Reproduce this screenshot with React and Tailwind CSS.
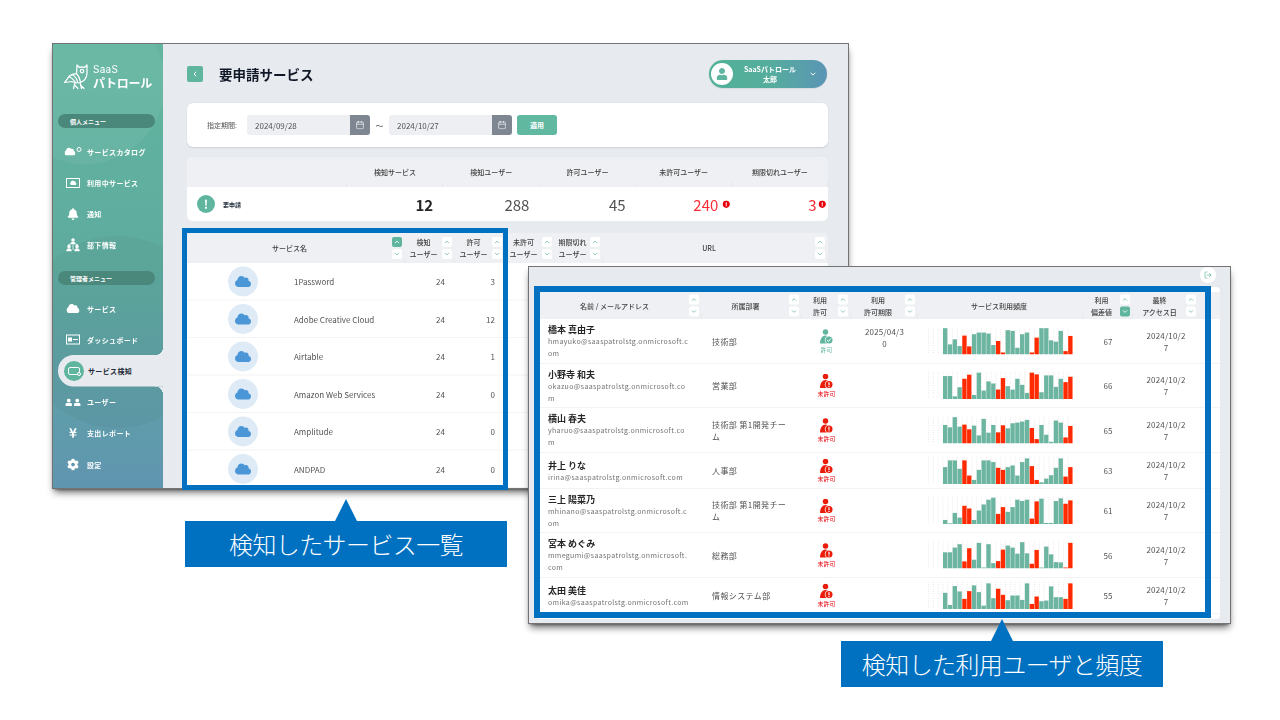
import { Calendar, ChevronDown, ChevronLeft, ChevronUp, LogOut } from 'lucide-react';
import { FaBell, FaCloud, FaCog, FaExclamationCircle, FaUser, FaYenSign } from 'react-icons/fa';

const services = [
  ['1Password', 24, 3],
  ['Adobe Creative Cloud', 24, 12],
  ['Airtable', 24, 1],
  ['Amazon Web Services', 24, 0],
  ['Amplitude', 24, 0],
  ['ANDPAD', 24, 0],
];

// bar heights out of 80, negative = red
const users = [
  {
    name: '橋本 真由子', mail: 'hmayuko@saaspatrolstg.onmicrosoft.com', dept: '技術部', ok: true, limit: '2025/04/30', score: 67,
    bars: [78, 30, 45, 25, -56, -24, 60, 65, 65, 62, 28, -40, -6, 72, 70, 20, 60, 65, -6, -50, 78, 78, 42, 38, 70, -10, -55],
  },
  {
    name: '小野寺 和夫', mail: 'okazuo@saaspatrolstg.onmicrosoft.com', dept: '営業部', score: 66,
    bars: [68, 68, 8, 35, -60, -72, 12, 78, 25, 52, 46, -28, -62, 38, 28, 60, 42, 18, -78, -73, 20, 70, 70, 36, 60, -50, -66],
  },
  {
    name: '横山 春夫', mail: 'yharuo@saaspatrolstg.onmicrosoft.com', dept: '技術部 第1開発チーム', score: 65,
    bars: [55, 48, 78, 50, -56, -42, 53, 24, 73, 32, 55, -33, -54, 45, 60, 62, 65, 70, -46, -13, 55, 26, 5, 68, 62, -18, -52],
  },
  {
    name: '井上 りな', mail: 'irina@saaspatrolstg.onmicrosoft.com', dept: '人事部', score: 63,
    bars: [50, 70, 70, 45, -70, -25, 12, 42, 70, 70, 65, -48, -42, 50, 55, 25, 65, 76, -53, -12, 5, 16, 26, 48, 76, -22, -50],
  },
  {
    name: '三上 陽菜乃', mail: 'mhinano@saaspatrolstg.onmicrosoft.com', dept: '技術部 第1開発チーム', score: 61,
    bars: [12, 2, 33, 19, -54, -46, 12, 40, 58, 72, 78, -30, -50, 36, 50, 72, 68, 72, -16, -67, 75, 3, 3, 68, 76, -60, -70],
  },
  {
    name: '宮本 めぐみ', mail: 'mmegumi@saaspatrolstg.onmicrosoft.com', dept: '総務部', score: 56,
    bars: [48, 48, 62, 72, -21, -60, 26, 76, 3, 72, 16, -22, -56, 68, 62, 44, 78, 45, -14, -55, 3, 65, 42, 19, 18, -3, -76],
  },
  {
    name: '太田 美佳', mail: 'omika@saaspatrolstg.onmicrosoft.com', dept: '情報システム部', score: 55,
    bars: [48, 12, 68, 52, -30, -53, 70, 50, 10, 76, 32, -60, -42, 26, 40, 40, 27, 76, -15, -37, 23, 25, 67, 35, 35, -30, -76],
  },
];

const userGrid = 'grid grid-cols-[324px_200px_98px_134px_330px_100px_132px]';
const serviceGrid = 'grid grid-cols-[436px_100px_100px_100px_96px_1fr]';
const summaryGrid = 'grid grid-cols-[320px_repeat(5,1fr)]';

function OwlLogo() {
  return (
    <svg width="52" height="54" viewBox="0 0 52 54" fill="none" stroke="white" strokeWidth="2.5" strokeLinejoin="round" strokeLinecap="round">
      <path d="M28 3 L33 8 Q38 6 43 8 L48 3 L48 20 Q47 34 34 38 Q24 40 18 36 L3 38 L12 26 Q18 20 27 20 Z" />
      <circle cx="38" cy="15" r="3.5" />
      <path d="M12 26 Q20 30 24 36 M18 22 Q26 26 29 36 M27 20 Q33 26 35 37" />
      <path d="M24 39 L21 50 M24 44 L30 50 M34 38 L37 50 M36 44 L42 50" />
    </svg>
  );
}

function SideIcon({ name }) {
  if (name === 'catalog') {
    return (
      <span className="flex items-center gap-0.5 text-white">
        <FaCloud size={22} />
        <span className="mb-2 size-2.5 rounded-full border-2 border-white" />
      </span>
    );
  }
  if (name === 'inuse') {
    return (
      <span className="flex h-5 w-7 items-center justify-center border-2 border-white text-white">
        <FaCloud size={13} />
      </span>
    );
  }
  if (name === 'bell') return <FaBell size={24} className="text-white" />;
  if (name === 'team') {
    return (
      <svg width="28" height="28" viewBox="0 0 28 28" fill="white" stroke="white">
        <circle cx="14" cy="4" r="3" />
        <path d="M9 12 Q9 8 14 8 Q19 8 19 12 Z" />
        <circle cx="6" cy="17" r="3" />
        <path d="M1 26 Q1 21 6 21 Q11 21 11 26 Z" />
        <circle cx="22" cy="17" r="3" />
        <path d="M17 26 Q17 21 22 21 Q27 21 27 26 Z" />
        <path d="M9 13 L5 13 L5 14 M19 13 L23 13 L23 14 M14 13 L14 24" fill="none" strokeWidth="1.5" />
      </svg>
    );
  }
  if (name === 'cloud') return <FaCloud size={26} className="text-white" />;
  if (name === 'board') {
    return (
      <span className="flex h-5 w-7 items-center gap-0.5 border-2 border-white px-0.5">
        <span className="size-2 bg-white" />
        <span className="h-0.5 flex-1 bg-white" />
      </span>
    );
  }
  if (name === 'users') {
    return (
      <span className="flex items-center gap-0.5 text-white">
        <FaUser size={15} />
        <FaUser size={15} />
      </span>
    );
  }
  if (name === 'yen') return <FaYenSign size={22} className="text-white" />;
  return <FaCog size={24} className="text-white" />;
}

function SideItem({ icon, label }) {
  return (
    <div className="relative flex flex-1 items-center gap-3 pl-6">
      <span className="flex w-8 justify-center">
        <SideIcon name={icon} />
      </span>
      <span className="text-sm font-bold tracking-wider text-white">{label}</span>
    </div>
  );
}

function ActiveItem({ label }) {
  return (
    <div className="relative ml-2.5 flex flex-1 items-center gap-2 rounded-l-full bg-[#e7eaee] pl-3">
      <span className="absolute -top-4 right-0 size-4 bg-[radial-gradient(circle_at_0_0,transparent_16px,#e7eaee_16px)]" />
      <span className="absolute -bottom-4 right-0 size-4 bg-[radial-gradient(circle_at_0_100%,transparent_16px,#e7eaee_16px)]" />
      <span className="flex size-10 items-center justify-center rounded-full bg-[#5fb59e]">
        <span className="relative h-4 w-6 rounded-sm border-2 border-white">
          <span className="absolute -bottom-1 -right-1 size-2 rounded-full border-2 border-white bg-[#5fb59e]" />
        </span>
      </span>
      <span className="text-sm font-bold tracking-wider text-gray-800">{label}</span>
    </div>
  );
}

function MenuPill({ label, className }) {
  return (
    <div className={`relative ml-2.5 mr-4 flex h-7 shrink-0 items-center rounded-full bg-[#4b887c] px-6 text-xs font-bold text-white ${className}`}>
      {label}
    </div>
  );
}

function Sidebar() {
  return (
    <div className="relative flex w-55 shrink-0 flex-col overflow-hidden bg-linear-to-b from-[#63b5a0] via-[#5eab9e] to-[#6095b0] pb-4">
      <div className="absolute -left-24 -top-20 size-80 rounded-full bg-white/5" />
      <div className="absolute -left-16 top-96 size-96 rounded-full bg-black/3" />
      <div className="relative flex h-35 shrink-0 items-center gap-2 pb-2 pl-5">
        <OwlLogo />
        <div className="flex flex-col text-white">
          <span className="font-['Inter',sans-serif] text-xl leading-6 tracking-wide">SaaS</span>
          <span className="text-2xl font-bold leading-8 tracking-tight">パトロール</span>
        </div>
      </div>
      <MenuPill label="個人メニュー" className="mb-4" />
      <SideItem icon="catalog" label="サービスカタログ" />
      <SideItem icon="inuse" label="利用中サービス" />
      <SideItem icon="bell" label="通知" />
      <SideItem icon="team" label="部下情報" />
      <MenuPill label="管理者メニュー" className="mb-4 mt-5" />
      <SideItem icon="cloud" label="サービス" />
      <SideItem icon="board" label="ダッシュボード" />
      <ActiveItem label="サービス検知" />
      <SideItem icon="users" label="ユーザー" />
      <SideItem icon="yen" label="支出レポート" />
      <SideItem icon="gear" label="設定" />
    </div>
  );
}

function DateInput({ value }) {
  return (
    <div className="flex h-10 w-61.5 items-center overflow-hidden rounded-md bg-[#edeff3]">
      <span className="flex-1 pl-4 text-base text-neutral-600">{value}</span>
      <span className="flex h-10 w-10 items-center justify-center bg-[#7d8691]">
        <Calendar size={18} className="text-gray-200" />
      </span>
    </div>
  );
}

function Sort({ active }) {
  const cell = 'flex size-5 items-center justify-center rounded';
  const on = 'bg-[#5fb59e] text-white';
  const off = 'bg-white text-[#7cc0ae]';
  return (
    <div className="flex shrink-0 flex-col gap-1">
      <span className={`${cell} ${active === 'up' ? on : off}`}>
        <ChevronUp size={14} strokeWidth={3} />
      </span>
      <span className={`${cell} ${active === 'down' ? on : off}`}>
        <ChevronDown size={14} strokeWidth={3} />
      </span>
    </div>
  );
}

function HeadCell({ children, active, sort = true }) {
  return (
    <div className="relative flex items-center pr-1.5 text-sm font-medium leading-6 text-neutral-700">
      <span className="flex-1 text-center">{children}</span>
      {sort && <Sort active={active} />}
      <span className="absolute bottom-0 right-0 h-2.5 w-0.5 bg-gray-200" />
    </div>
  );
}

function SummaryCard() {
  const heads = ['検知サービス', '検知ユーザー', '許可ユーザー', '未許可ユーザー', '期限切れユーザー'];
  return (
    <div className="mt-5 overflow-hidden rounded-xl bg-white">
      <div className={`${summaryGrid} h-15 bg-[#eef0f3]`}>
        <div className="relative">
          <span className="absolute bottom-0 right-0 h-2.5 w-0.5 bg-gray-200" />
        </div>
        {heads.map((h) => (
          <div key={h} className="relative flex items-center justify-center text-sm font-medium text-neutral-700">
            {h}
            <span className="absolute bottom-0 right-0 h-2.5 w-0.5 bg-gray-200" />
          </div>
        ))}
      </div>
      <div className={`${summaryGrid} h-17 items-center`}>
        <div className="flex items-center gap-4 pl-5">
          <span className="flex size-9 items-center justify-center rounded-full bg-[#5fb59e] text-2xl font-bold text-white">!</span>
          <span className="text-xs font-bold text-gray-800">要申請</span>
        </div>
        <div className="pr-5 text-right text-3xl font-bold text-neutral-800">12</div>
        <div className="pr-5 text-right text-3xl text-neutral-600">288</div>
        <div className="pr-5 text-right text-3xl text-neutral-600">45</div>
        <div className="flex items-center justify-end gap-2 pr-1 text-3xl text-red-500">
          240 <FaExclamationCircle size={15} className="text-red-600" />
        </div>
        <div className="flex items-center justify-end gap-1 pr-1 text-3xl text-red-500">
          3 <FaExclamationCircle size={15} className="text-red-600" />
        </div>
      </div>
    </div>
  );
}

function ServiceTable() {
  return (
    <div className="mt-6 rounded-t-xl bg-white">
      <div className={`${serviceGrid} h-15 rounded-t-xl bg-[#eef0f3]`}>
        <HeadCell active="up">サービス名</HeadCell>
        <HeadCell>検知<br />ユーザー</HeadCell>
        <HeadCell>許可<br />ユーザー</HeadCell>
        <HeadCell>未許可<br />ユーザー</HeadCell>
        <HeadCell>期限切れ<br />ユーザー</HeadCell>
        <HeadCell>URL</HeadCell>
      </div>
      {services.map(([name, found, allowed]) => (
        <div key={name} className={`${serviceGrid} h-18.75 items-center border-b-2 border-gray-100 text-base text-neutral-600`}>
          <div className="flex items-center gap-18 pl-20.5">
            <span className="flex size-15 items-center justify-center rounded-full bg-[#deebf6] text-[#4b96d6]">
              <FaCloud size={32} />
            </span>
            <span>{name}</span>
          </div>
          <div className="pr-5 text-right">{found}</div>
          <div className="pr-5 text-right">{allowed}</div>
        </div>
      ))}
    </div>
  );
}

function ServiceWindow() {
  return (
    <div className="absolute left-13 top-10.75 flex h-223 w-398.5 origin-top-left scale-50 overflow-hidden border-2 border-neutral-500 bg-[#e7eaee] shadow-lg shadow-black/60">
      <Sidebar />
      <div className="flex-1 pl-12 pr-10 pt-8">
        <div className="flex h-14 items-center justify-between">
          <div className="flex items-center gap-8">
            <span className="flex size-8 items-center justify-center rounded bg-[#5fb59e] text-white">
              <ChevronLeft size={16} strokeWidth={3} />
            </span>
            <h1 className="text-[27px] font-bold text-gray-900">要申請サービス</h1>
          </div>
          <div className="mr-0.5 flex h-14 w-59 items-center rounded-full bg-linear-to-r from-[#52b198] via-[#55ad9c] to-[#5b95b5] pl-1 pr-5 shadow">
            <span className="flex size-11 items-center justify-center overflow-hidden rounded-full bg-white text-[#5fb59e]">
              <FaUser size={24} />
            </span>
            <div className="flex-1 pr-1 text-center text-sm font-bold leading-5 text-white">
              SaaSパトロール<br />太郎
            </div>
            <ChevronDown size={16} strokeWidth={3} className="text-white" />
          </div>
        </div>

        <div className="mt-7.5 flex h-22 items-center rounded-xl bg-white px-10 shadow-sm">
          <span className="w-20 text-sm text-neutral-600">指定期間:</span>
          <DateInput value="2024/09/28" />
          <span className="w-9.5 text-center text-base text-neutral-600">〜</span>
          <DateInput value="2024/10/27" />
          <button className="ml-2.5 h-10 w-20 rounded-md bg-[#60b8a0] text-sm font-bold text-white">適用</button>
        </div>

        <SummaryCard />
        <ServiceTable />
      </div>
    </div>
  );
}

function Chart({ bars }) {
  return (
    <svg width="290" height="54" viewBox="0 0 290 54">
      {Array.from({ length: 30 }).map((_, i) => (
        <line key={i} x1={i * 9.63 + 1} x2={i * 9.63 + 1} y1="0" y2="54" stroke="#dccccc" strokeWidth="1.2" strokeDasharray="1.5 3" />
      ))}
      {bars.map((b, i) => {
        const h = (Math.abs(b) * 54) / 80;
        return <rect key={i} x={30 + i * 9.63} y={54 - h} width="8.7" height={h} fill={b < 0 ? '#ff2a00' : '#6cb5a0'} />;
      })}
    </svg>
  );
}

function PermitIcon({ ok }) {
  const color = ok ? '#5fb59e' : '#ea1c0a';
  return (
    <svg width="28" height="30" viewBox="0 0 28 30">
      <circle cx="12" cy="6" r="5.5" fill={color} />
      <path d="M1 29 C1 19 6 13 12 13 C18 13 23 19 23 29 Z" fill={color} />
      <circle cx="19" cy="22" r="8.5" fill="white" />
      <circle cx="19" cy="22" r="7" fill={color} />
      {ok ? (
        <path d="M15 22 L18 25 L23 19" fill="none" stroke="white" strokeWidth="2" />
      ) : (
        <path d="M19 17.5 L19 23.5 M19 25 L19 27" fill="none" stroke="white" strokeWidth="2.4" />
      )}
    </svg>
  );
}

function UserRow({ user }) {
  return (
    <div className={`${userGrid} min-h-18 items-center border-b border-gray-200`}>
      <div className="py-2 pl-4 pr-6">
        <div className="text-lg font-bold leading-6 text-neutral-800">{user.name}</div>
        <div className="break-all text-sm leading-6 tracking-wider text-neutral-500">{user.mail}</div>
      </div>
      <div className="pl-5 pr-4 text-base leading-6 tracking-wider text-neutral-600">{user.dept}</div>
      <div className="flex flex-col items-center gap-0.5">
        <PermitIcon ok={user.ok} />
        <span className={`text-xs ${user.ok ? 'text-[#5fb59e]' : 'text-red-600'}`}>{user.ok ? '許可' : '未許可'}</span>
      </div>
      <div className="self-start break-all px-6 py-3 text-center text-base leading-6 tracking-wide text-neutral-600">{user.limit}</div>
      <div className="pl-5">
        <Chart bars={user.bars} />
      </div>
      <div className="text-center text-base text-neutral-600">{user.score}</div>
      <div className="break-all px-6 text-center text-base leading-6 tracking-wide text-neutral-600">2024/10/27</div>
    </div>
  );
}

function UserWindow() {
  return (
    <div className="absolute left-132 top-66.5 flex h-179 w-351.5 origin-top-left scale-50 flex-col border-2 border-neutral-500 bg-[#e7eaee] pb-2 pl-4 pr-5 shadow-lg shadow-black/60">
      <div className="flex h-10 shrink-0 justify-end pr-2">
        <span className="flex size-8 items-center justify-center rounded-full bg-white text-[#5fb59e]">
          <LogOut size={16} />
        </span>
      </div>
      <div className="flex-1 overflow-hidden rounded-lg bg-white pl-1.5 pt-2.5">
        <div className={`${userGrid} h-13.5 bg-[#eef0f3]`}>
          <HeadCell>名前 / メールアドレス</HeadCell>
          <HeadCell>所属部署</HeadCell>
          <HeadCell>利用<br />許可</HeadCell>
          <HeadCell>利用<br />許可期限</HeadCell>
          <HeadCell sort={false}>サービス利用頻度</HeadCell>
          <HeadCell active="down">利用<br />偏差値</HeadCell>
          <HeadCell>最終<br />アクセス日</HeadCell>
        </div>
        {users.map((u) => (
          <UserRow key={u.name} user={u} />
        ))}
      </div>
    </div>
  );
}

function Callout({ label, className }) {
  return (
    <div className={`absolute flex w-80.5 flex-col items-center ${className}`}>
      <svg width="22" height="22" viewBox="0 0 22 22">
        <polygon points="11,0 22,22 0,22" fill="#0070c0" />
      </svg>
      <div className="flex h-11.5 w-full items-center justify-center bg-[#0070c0] text-2xl font-light tracking-tight text-white">{label}</div>
    </div>
  );
}

export default function App() {
  return (
    <div className="relative h-screen w-screen overflow-hidden bg-white font-['Noto_Sans_CJK_JP',sans-serif]">
      <ServiceWindow />
      <div className="absolute left-45.5 top-57 h-65.5 w-81.5 border-[5px] border-[#0070c0]" />
      <UserWindow />
      <div className="absolute left-133.5 top-71.5 h-83 w-169.25 border-[6px] border-[#0070c0]" />
      <Callout label="検知したサービス一覧" className="left-46.25 top-124.75" />
      <Callout label="検知した利用ユーザと頻度" className="left-210.25 top-154.75" />
    </div>
  );
}
